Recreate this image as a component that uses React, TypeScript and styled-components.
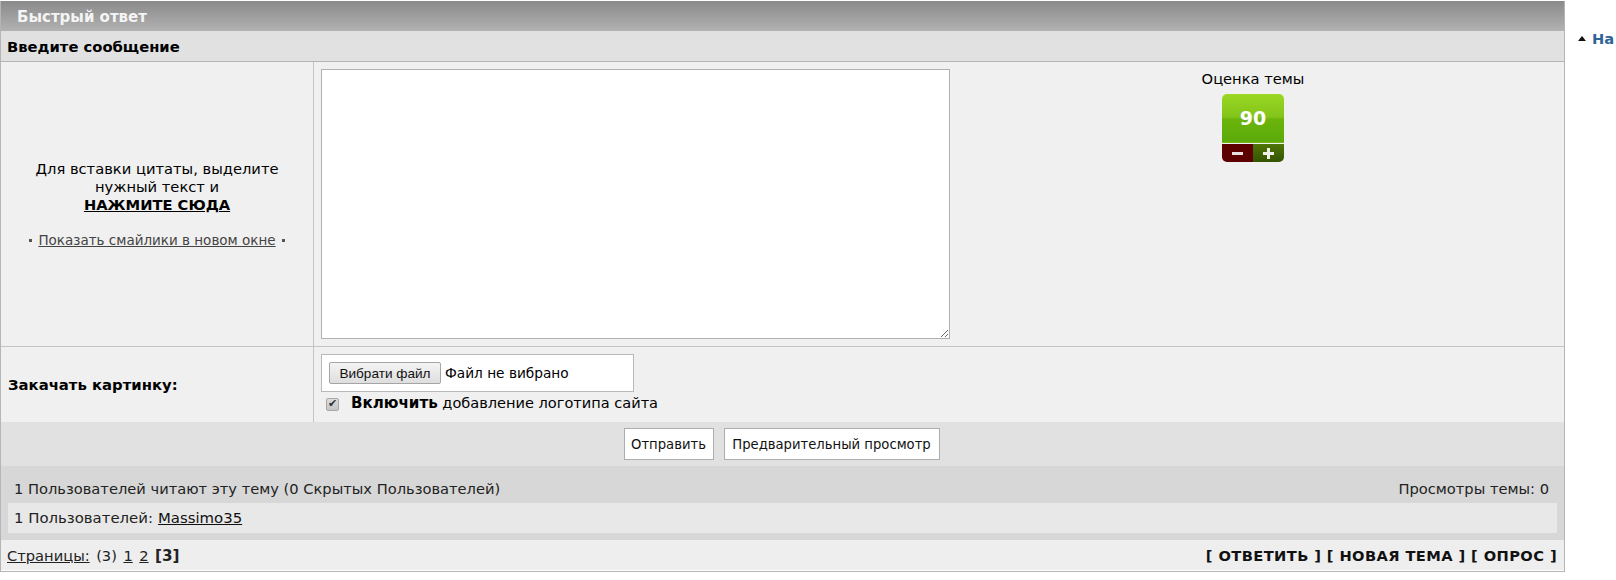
import React from 'react';
import styled, { createGlobalStyle } from 'styled-components';

const Global = createGlobalStyle`
  html, body { margin: 0; padding: 0; background: #fff; overflow: hidden; }
  body { font-family: "DejaVu Sans", Verdana, sans-serif; font-size: 14.67px; color: #000; }
`;

const Page = styled.div`
  display: flex;
  width: 1616px;
  height: 580px;
  padding-top: 1px;
  box-sizing: border-box;
  overflow: hidden;
`;
const Panel = styled.div`
  width: 1563px;
  flex: none;
  height: 570px;
  border-right: 1px solid #b5b5b5;
  border-left: 1px solid #b5b5b5;
  border-bottom: 1px solid #b5b5b5;
  display: flex;
  flex-direction: column;
`;
const TitleBar = styled.div`
  height: 30px;
  flex: none;
  display: flex;
  align-items: center;
  padding: 1px 0 0 16px;
  box-sizing: border-box;
  background: linear-gradient(to bottom, #8a8a8a, #b2b2b2);
  color: #f4f4f4;
  font-weight: bold;
  font-size: 15px;
`;
const SubBar = styled.div`
  height: 30px;
  flex: none;
  display: flex;
  align-items: center;
  padding-left: 6px;
  background: #e1e1e1;
  border-bottom: 1px solid #b5b5b5;
  font-weight: bold;
  font-size: 14.75px;
`;
const FormRow = styled.div<{ $h: number; $line?: boolean }>`
  display: grid;
  grid-template-columns: 312px 1fr;
  height: ${p => p.$h}px;
  flex: none;
  background: #f0f0f0;
  border-bottom: ${p => (p.$line ? '1px solid #c4c4c4' : 'none')};
`;
const LabelCell = styled.div`
  display: flex;
  flex-direction: column;
  align-items: center;
  justify-content: center;
  text-align: center;
  padding: 0 30px;
  line-height: 18px;
  font-size: 14.7px;
`;
const LeftLabel = styled.div`
  display: flex;
  align-items: center;
  padding-left: 7px;
  font-weight: bold;
  font-size: 14.85px;
`;
const StrongLink = styled.a`
  font-weight: bold;
  text-decoration: underline;
  color: #000;
`;
const SmileLine = styled.div`
  margin-top: 17px;
  display: flex;
  align-items: center;
  gap: 6px;
  font-size: 13.5px;
  white-space: nowrap;
  & a { color: #444; text-decoration: underline; }
`;
const Dot = styled.span`
  width: 3px;
  height: 3px;
  margin-top: 2px;
  flex: none;
  background: #555;
`;
const ContentCell = styled.div`
  border-left: 1px solid #c4c4c4;
  display: flex;
  padding: 7px 0 0 7px;
`;
const MessageBox = styled.textarea`
  width: 629px;
  height: 270px;
  box-sizing: border-box;
  border: 1px solid #b0b0b0;
  background: #fff;
  margin: 0;
  flex: none;
  resize: both;
`;
const RateColumn = styled.div`
  flex: 1;
  display: flex;
  flex-direction: column;
  align-items: center;
  padding: 2px 8px 0 0;
`;
const RateTitle = styled.div`
  line-height: 16px;
`;
const Rate = styled.div`
  margin-top: 7px;
  width: 62px;
  height: 68px;
  display: flex;
  flex-direction: column;
  border-radius: 5px;
  overflow: hidden;
`;
const Score = styled.div`
  height: 49px;
  flex: none;
  display: flex;
  align-items: center;
  justify-content: center;
  color: #fff;
  font-weight: bold;
  font-size: 19px;
  background: linear-gradient(to bottom, #9cd824 0%, #82c41a 48%, #6cb40c 52%, #5aaa0a 100%);
  border-bottom: 1px solid #76b81a;
  box-sizing: border-box;
`;
const VoteRow = styled.div`
  margin-top: 1px;
  flex: 1;
  display: grid;
  grid-template-columns: 1fr 1fr;
`;
const Vote = styled.div<{ $up?: boolean }>`
  display: flex;
  align-items: center;
  justify-content: center;
  background: ${p => (p.$up ? 'linear-gradient(to bottom, #4f7508, #345400)' : '#5c0000')};
`;
const UploadCell = styled.div`
  border-left: 1px solid #c4c4c4;
  padding: 7px 0 0 7px;
`;
const FileBox = styled.div`
  width: 313px;
  height: 38px;
  box-sizing: border-box;
  border: 1px solid #b9b9b9;
  background: #fff;
  display: flex;
  align-items: center;
  padding-left: 7px;
  font-size: 13.7px;
`;
const FileButton = styled.button`
  width: 112px;
  height: 22px;
  box-sizing: border-box;
  padding: 0;
  margin-right: 4px;
  border: 1px solid #a5a5a5;
  border-radius: 2px;
  background: linear-gradient(to bottom, #f4f4f4, #dedede);
  font-family: "Liberation Sans", Arial, sans-serif;
  font-size: 13.6px;
  color: #111;
`;
const CheckLine = styled.label`
  display: flex;
  align-items: baseline;
  padding: 2px 0 0 5px;
  height: 22px;
  box-sizing: border-box;
  font-size: 14.55px;
  white-space: pre;
  & b { font-size: 15.1px; }
`;
const Check = styled.input`
  appearance: none;
  align-self: center;
  margin: 0 12px 0 0;
  width: 13px;
  height: 13px;
  border: 1px solid #a8a8a8;
  border-radius: 2px;
  background: linear-gradient(to bottom, #dcdcdc, #c4c4c4);
  position: relative;
  &::after {
    content: "✔";
    position: absolute;
    left: 1px;
    top: -2px;
    font-size: 11px;
    color: #333;
  }
`;
const ButtonBar = styled.div`
  height: 44px;
  flex: none;
  display: flex;
  align-items: center;
  justify-content: center;
  gap: 10px;
  padding-right: 2px;
  box-sizing: border-box;
  background: #e1e1e1;
`;
const ActionButton = styled.button<{ $w: number }>`
  width: ${p => p.$w}px;
  height: 32px;
  padding: 0;
  box-sizing: border-box;
  border: 1px solid #adadad;
  background: #fff;
  font-family: "DejaVu Sans", Verdana, sans-serif;
  font-size: 13.2px;
  color: #111;
`;
const StatsBlock = styled.div`
  height: 74px;
  flex: none;
  background: #d7d7d7;
  display: flex;
  flex-direction: column;
`;
const StatsHead = styled.div`
  height: 37px;
  flex: none;
  display: flex;
  justify-content: space-between;
  align-items: center;
  padding: 8px 15px 0 13px;
  box-sizing: border-box;
  color: #222;
`;
const UsersLine = styled.div`
  height: 30px;
  flex: none;
  margin: 0 7px;
  padding-left: 6px;
  display: flex;
  align-items: center;
  gap: 5px;
  background: #e8e8e8;
  color: #222;
  font-size: 14.9px;
  & a { color: #111; text-decoration: underline; }
`;
const Footer = styled.div`
  height: 30px;
  flex: none;
  display: flex;
  justify-content: space-between;
  align-items: center;
  padding: 0 7px 0 6px;
  background: #eeeeee;
`;
const Pager = styled.div`
  display: flex;
  align-items: baseline;
  gap: 6.5px;
  padding-top: 1px;
  color: #222;
  & a { color: #222; text-decoration: underline; }
  & b { font-size: 15.2px; }
`;
const Actions = styled.div`
  font-weight: bold;
  letter-spacing: 0.4px;
  color: #111;
`;
const Side = styled.div`
  flex: 1;
  min-width: 0;
  display: flex;
  align-items: center;
  height: 14px;
  margin-top: 30px;
  padding-left: 13px;
  gap: 6px;
  overflow: hidden;
`;
const Arrow = styled.span`
  width: 0;
  height: 0;
  border-left: 4px solid transparent;
  border-right: 4px solid transparent;
  border-bottom: 5px solid #111;
  flex: none;
`;
const TopLink = styled.a`
  font-weight: bold;
  color: #2f6496;
  white-space: nowrap;
`;

export default function App() {
  return (
    <Page>
      <Global />
      <Panel>
        <TitleBar>Быстрый ответ</TitleBar>
        <SubBar>Введите сообщение</SubBar>
        <FormRow $h={284} $line>
          <LabelCell>
            <div>Для вставки цитаты, выделите нужный текст и</div>
            <StrongLink>НАЖМИТЕ СЮДА</StrongLink>
            <SmileLine>
              <Dot />
              <a>Показать смайлики в новом окне</a>
              <Dot />
            </SmileLine>
          </LabelCell>
          <ContentCell>
            <MessageBox />
            <RateColumn>
              <RateTitle>Оценка темы</RateTitle>
              <Rate>
                <Score>90</Score>
                <VoteRow>
                  <Vote>
                    <svg width="11" height="3" viewBox="0 0 11 3"><rect width="11" height="3" fill="#e8e0e0" /></svg>
                  </Vote>
                  <Vote $up>
                    <svg width="11" height="11" viewBox="0 0 11 11"><path d="M4 0h3v4h4v3H7v4H4V7H0V4h4z" fill="#f0f0e8" /></svg>
                  </Vote>
                </VoteRow>
              </Rate>
            </RateColumn>
          </ContentCell>
        </FormRow>
        <FormRow $h={75}>
          <LeftLabel>Закачать картинку:</LeftLabel>
          <UploadCell>
            <FileBox>
              <FileButton>Вибрати файл</FileButton>
              Файл не вибрано
            </FileBox>
            <CheckLine>
              <Check type="checkbox" defaultChecked />
              <b>Включить</b> добавление логотипа сайта
            </CheckLine>
          </UploadCell>
        </FormRow>
        <ButtonBar>
          <ActionButton $w={90}>Отправить</ActionButton>
          <ActionButton $w={216}>Предварительный просмотр</ActionButton>
        </ButtonBar>
        <StatsBlock>
          <StatsHead>
            <span>1 Пользователей читают эту тему (0 Скрытых Пользователей)</span>
            <span>Просмотры темы: 0</span>
          </StatsHead>
          <UsersLine>
            1 Пользователей: <a>Massimo35</a>
          </UsersLine>
        </StatsBlock>
        <Footer>
          <Pager>
            <a>Страницы:</a>
            <span>(3)</span>
            <a>1</a>
            <a>2</a>
            <b>[3]</b>
          </Pager>
          <Actions>[ ОТВЕТИТЬ ] [ НОВАЯ ТЕМА ] [ ОПРОС ]</Actions>
        </Footer>
      </Panel>
      <Side>
        <Arrow />
        <TopLink>На</TopLink>
      </Side>
    </Page>
  );
}
